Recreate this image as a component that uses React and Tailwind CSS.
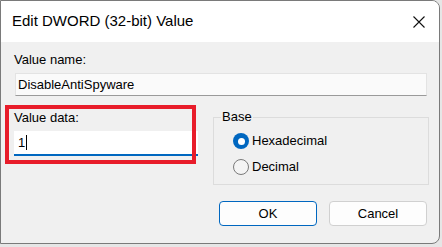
export default function App() {
  const font = { fontFamily: '"Liberation Sans", Arial, sans-serif' };
  return (
    <div className="w-[442px] h-[247px] bg-[#e6e6e6] overflow-hidden" style={font}>
      <div className="relative w-[440px] h-[244px] border border-[#7a7a7a] rounded-r-[8px] bg-[#f0f0f0] overflow-hidden flex flex-col">
        {/* Title bar */}
        <div className="h-[41px] bg-white flex items-center justify-between shrink-0">
          <div className="pl-[11px] text-[15px] text-black">Edit DWORD (32-bit) Value</div>
          <div className="w-[44px] h-[41px] flex items-center justify-center mr-[-2px]">
            <svg width="12" height="12" viewBox="0 0 12 12">
              <path d="M0.5 0.5 L11.5 11.5 M11.5 0.5 L0.5 11.5" stroke="#111" strokeWidth="1.1" fill="none" />
            </svg>
          </div>
        </div>
        {/* Body */}
        <div className="flex flex-col pl-[13px] text-[13px] leading-[16px] text-black">
          <div className="mt-[10px]">Value name:</div>
          <div className="mt-[5px] ml-[1px] w-[412px] h-[23px] bg-[#fafafa] border border-[#e3e3e3] border-b-[#9a9a9a] flex items-center pl-[2px]">
            DisableAntiSpyware
          </div>
          <div className="flex mt-[14px]">
            <div className="flex flex-col w-[184px]">
              <div>Value data:</div>
              <div className="mt-[5px] w-[184px] h-[25px] bg-white border-b-2 border-[#0067c0] flex items-center pl-[4px]">
                <span>1</span>
                <span className="w-px h-[15px] bg-black ml-[1px]"></span>
              </div>
            </div>
            <div className="relative ml-[15px] mt-[7px] w-[216px] h-[68px] border border-[#dcdcdc]">
              <div className="absolute left-[7px] top-[-9px] bg-[#f0f0f0] px-[1px]">Base</div>
              <div className="flex flex-col pl-[19px] pt-[15px] gap-[10px]">
                <div className="flex items-center gap-[3px]">
                  <div className="w-[16px] h-[16px] rounded-full bg-[#0067c0] flex items-center justify-center">
                    <div className="w-[7px] h-[7px] rounded-full bg-white"></div>
                  </div>
                  <span>Hexadecimal</span>
                </div>
                <div className="flex items-center gap-[3px]">
                  <div className="w-[16px] h-[16px] rounded-full bg-[#f4f4f4] border border-[#7a7a7a]"></div>
                  <span>Decimal</span>
                </div>
              </div>
            </div>
          </div>
          <div className="flex mt-[16px] ml-[205px] gap-[12px]">
            <div className="w-[98px] h-[25px] rounded-[4px] bg-[#fdfdfd] border border-[#0067c0] flex items-center justify-center">OK</div>
            <div className="w-[98px] h-[25px] rounded-[4px] bg-[#fdfdfd] border border-[#d0d0d0] flex items-center justify-center">Cancel</div>
          </div>
        </div>
        {/* Red annotation rectangle */}
        <div className="absolute left-[4px] top-[104px] w-[191px] h-[59px] border-[4px] border-[#e81c2a]"></div>
      </div>
    </div>
  );
}
